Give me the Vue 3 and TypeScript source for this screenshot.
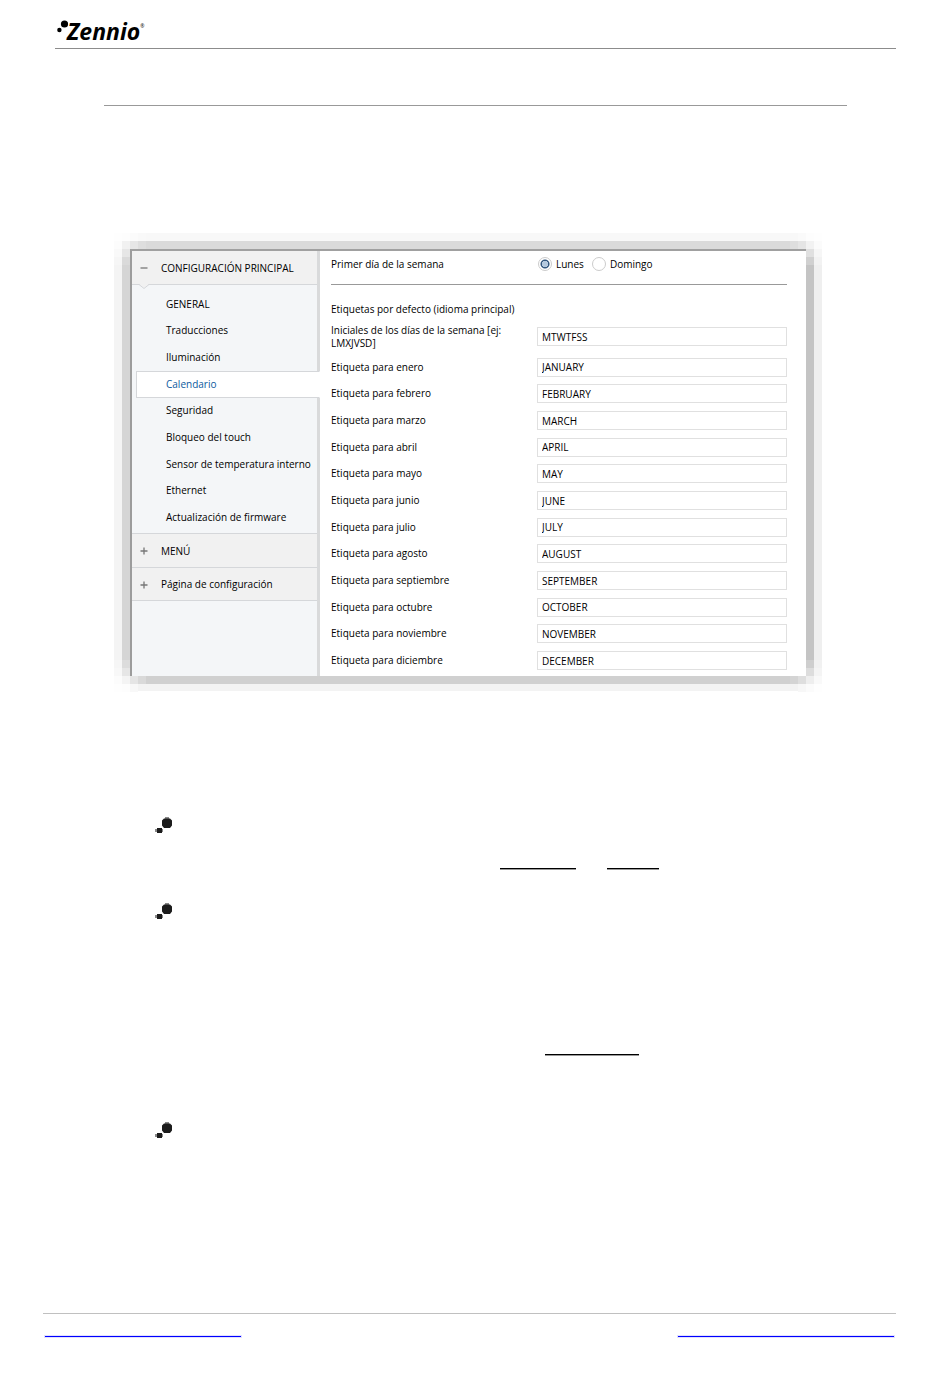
<script setup lang="ts">
import { ref } from 'vue'

interface Field {
  id: string
  label: string
  value: string
}

interface Corner {
  name: string
  flipX: boolean
  flipY: boolean
  cells: [number, number, string][]
}

const sections = ['GENERAL', 'Traducciones', 'Iluminación', 'Calendario', 'Seguridad', 'Bloqueo del touch', 'Sensor de temperatura interno', 'Ethernet', 'Actualización de firmware']
const active = ref('Calendario')
const firstDay = ref('Lunes')
const days = ['Lunes', 'Domingo']

const months: [string, string][] = [
  ['enero', 'JANUARY'], ['febrero', 'FEBRUARY'], ['marzo', 'MARCH'], ['abril', 'APRIL'],
  ['mayo', 'MAY'], ['junio', 'JUNE'], ['julio', 'JULY'], ['agosto', 'AUGUST'],
  ['septiembre', 'SEPTEMBER'], ['octubre', 'OCTOBER'], ['noviembre', 'NOVEMBER'], ['diciembre', 'DECEMBER'],
]
const initials = ref('MTWTFSS')
const fields = ref<Field[]>(months.map(([m, value]) => ({ id: `label-${m}`, label: `Etiqueta para ${m}`, value })))

// Shadow fade at each corner, in 8px cells counted inwards from the outer corner.
const corners: Corner[] = [
  { name: 'tl', flipX: false, flipY: false, cells: [[0, 0, '#fefefe'], [1, 0, '#fdfdfd'], [2, 0, '#fbfbfb'], [3, 0, '#f9f9f9'], [0, 1, '#fcfcfc'], [1, 1, '#f1f1f1'], [2, 1, '#e6e6e6'], [3, 1, '#dedede'], [0, 2, '#f9f9f9'], [1, 2, '#e6e6e6'], [0, 3, '#f6f6f6'], [1, 3, '#dadada']] },
  { name: 'tr', flipX: true, flipY: false, cells: [[0, 0, '#fefefe'], [1, 0, '#fdfdfd'], [2, 0, '#fafafa'], [0, 1, '#fbfbfb'], [1, 1, '#f2f2f2'], [2, 1, '#e5e5e5'], [3, 1, '#dedede'], [0, 2, '#f6f6f6'], [1, 2, '#e0e0e0'], [0, 3, '#f2f2f2'], [1, 3, '#d0d0d0']] },
  { name: 'bl', flipX: false, flipY: true, cells: [[0, 0, '#fefefe'], [1, 0, '#fdfdfd'], [2, 0, '#f8f8f8'], [0, 1, '#fcfcfc'], [1, 1, '#f4f4f4'], [2, 1, '#e5e5e5'], [3, 1, '#d9d9d9'], [0, 2, '#f8f8f8'], [1, 2, '#e6e6e6'], [0, 3, '#f6f6f6'], [1, 3, '#dcdcdc']] },
  { name: 'br', flipX: true, flipY: true, cells: [[0, 0, '#fefefe'], [1, 0, '#fbfbfb'], [2, 0, '#f7f7f7'], [0, 1, '#f9f9f9'], [1, 1, '#eeeeee'], [2, 1, '#dedede'], [3, 1, '#d4d4d4'], [0, 2, '#f4f4f4'], [1, 2, '#dddddd'], [0, 3, '#f1f1f1'], [1, 3, '#cecece']] },
]
const place = (n: number, flip: boolean): number => (flip ? 24 - n * 8 : n * 8)
</script>

<template>
  <div class="page">
    <header class="head">
      <svg class="dots" viewBox="0 0 12 14" aria-hidden="true">
        <circle cx="7.5" cy="4" r="3.6" />
        <circle cx="2.4" cy="10" r="2.2" />
      </svg>
      <span class="brand">Zennio</span><span class="reg">®</span>
    </header>
    <hr class="rule" />

    <div class="halo">
      <div class="shade">
        <div class="edge">
          <div class="panel">
            <nav class="side">
              <button class="group" type="button">
                <svg viewBox="0 0 8 8"><path d="M0.5 4h7" /></svg>CONFIGURACIÓN PRINCIPAL
                <svg class="notch" viewBox="0 0 10 5"><path class="fill" d="M0 0h10L5 4z" /><path class="line" d="M0 .5L5 4.5L10 .5" /></svg>
              </button>
              <ul class="items">
                <li v-for="s in sections" :key="s">
                  <button type="button" class="item" :class="{ active: s === active }" @click="active = s">{{ s }}</button>
                </li>
              </ul>
              <button class="group" type="button"><svg viewBox="0 0 8 8"><path d="M0.5 4h7M4 0.5v7" /></svg>MENÚ</button>
              <button class="group" type="button"><svg viewBox="0 0 8 8"><path d="M0.5 4h7M4 0.5v7" /></svg>Página de configuración</button>
            </nav>
            <form class="form" @submit.prevent>
              <div class="row first" role="radiogroup" aria-labelledby="first-day">
                <span id="first-day">Primer día de la semana</span>
                <div class="radios">
                  <label v-for="d in days" :key="d"><input v-model="firstDay" type="radio" name="day" :value="d" />{{ d }}</label>
                </div>
              </div>
              <h2>Etiquetas por defecto (idioma principal)</h2>
              <div class="row initials">
                <label for="initials">Iniciales de los días de la semana [ej: LMXJVSD]</label>
                <input id="initials" v-model="initials" type="text" />
              </div>
              <div class="months">
                <div v-for="f in fields" :key="f.id" class="row">
                  <label :for="f.id">{{ f.label }}</label>
                  <input :id="f.id" v-model="f.value" type="text" />
                </div>
              </div>
            </form>
          </div>
        </div>
      </div>
      <svg v-for="c in corners" :key="c.name" class="corner" :class="c.name" viewBox="0 0 32 32" aria-hidden="true">
        <rect v-for="([u, v, fill], i) in c.cells" :key="i" :x="place(u, c.flipX)" :y="place(v, c.flipY)" width="8" height="8" :fill="fill" />
      </svg>
    </div>

    <ul class="notes">
      <li>
        <svg class="bullet" viewBox="0 0 18 18"><path class="soft" d="M10 0h4v2h-4zM0 12h8v3H0z" /><path d="M9 1.500h6l2 2v5l-2 2.500h-6l-2-2.500v-5zM2 11h5v5H2z" /></svg>
        <div class="strokes"><i class="w76"></i><i class="w52"></i></div>
      </li>
      <li>
        <svg class="bullet" viewBox="0 0 18 18"><path class="soft" d="M10 0h4v2h-4zM0 12h8v3H0z" /><path d="M9 1.500h6l2 2v5l-2 2.500h-6l-2-2.500v-5zM2 11h5v5H2z" /></svg>
        <div class="strokes far"><i class="w94"></i></div>
      </li>
      <li>
        <svg class="bullet" viewBox="0 0 18 18"><path class="soft" d="M10 0h4v2h-4zM0 12h8v3H0z" /><path d="M9 1.500h6l2 2v5l-2 2.500h-6l-2-2.500v-5zM2 11h5v5H2z" /></svg>
      </li>
    </ul>

    <footer class="foot"><i class="left"></i><i class="right"></i></footer>
  </div>
</template>

<style>
body { margin: 0; background: #fff; }
</style>

<style scoped>
.page { box-sizing: border-box; min-height: 100vh; display: flex; flex-direction: column; padding-bottom: 41px; color: #000; font: 10px/13px "Open Sans", "Noto Sans", sans-serif; }
.head { display: flex; align-items: flex-start; box-sizing: border-box; height: 49px; margin: 0 54px 0 55px; padding: 18px 0 0 2px; border-bottom: 1px solid #8c8c8c; color: #000; }
.dots { width: 12px; height: 14px; margin-top: 2px; }
.brand { margin-left: -2px; font: italic 700 23px/26px "Open Sans", sans-serif; }
.reg { margin-top: 5px; font-size: 5px; line-height: 6px; }
.rule { height: 1px; margin: 56px 103px 0 104px; border: 0; background: #999; }
.halo { position: relative; margin: 127px 128px 0 114px; border: 8px solid; border-color: #f8f8f8 #efefef #f3f3f3 #f4f4f4; border-bottom-width: 7px; }
.shade { border: 8px solid; border-color: #dadada #c4c4c4 #d0d0d0 #d5d5d5; }
.edge { border-top: 2px solid #a0a0a0; border-left: 2px solid #9c9c9c; }
.corner { position: absolute; width: 32px; height: 32px; shape-rendering: crispEdges; pointer-events: none; }
.tl, .tr { top: -8px; }
.bl, .br { bottom: -8px; }
.tl, .bl { left: -8px; }
.tr, .br { right: -8px; }
.panel { display: flex; background: #fff; }
.side { flex: 0 0 185px; border-right: 3px solid #d9dadb; background: #f4f6f8; }
.group { position: relative; display: flex; align-items: center; gap: 13px; box-sizing: border-box; width: 100%; height: 34px; margin: 0; padding: 1px 0 0 8px; border: 0; border-bottom: 1px solid #d5d7da; background: #f1f1f1; color: #000; font: inherit; text-align: left; white-space: nowrap; }
.group:last-child { height: 33px; }
.group svg { width: 8px; height: 8px; fill: none; stroke: #777; stroke-width: 1.3; }
.group .notch { position: absolute; left: 7px; bottom: -5px; width: 10px; height: 5px; }
.notch .fill { fill: #f1f1f1; stroke: none; }
.notch .line { stroke: #d5d7da; stroke-width: 1; }
.items { display: grid; grid-auto-rows: 1fr; height: 240px; margin: 0; padding: 6px 0 2px; border-bottom: 1px solid #d5d7da; list-style: none; }
.items li { display: flex; }
.item { flex: 1; margin: 0 0 0 4px; padding: 0 0 0 29px; border: 1px solid transparent; background: none; color: #000; font: inherit; text-align: left; white-space: nowrap; }
.item.active { z-index: 1; margin-right: -3px; border-color: #d5d7da #fff #d5d7da #d5d7da; background: #fff; color: #0b5a9e; }
.form { flex: 1; padding: 0 19px 2px 11px; }
.row { display: grid; grid-template-columns: 206px 1fr; align-items: center; }
.first { box-sizing: border-box; height: 34px; padding-bottom: 6px; border-bottom: 1px solid #999; }
.radios { display: flex; gap: 7px; padding-bottom: 1px; }
.radios label { display: flex; align-items: center; gap: 4px; }
.radios input { appearance: none; box-sizing: border-box; width: 14px; height: 14px; margin: 0 0 0 1px; border: 1px solid #ccc; border-radius: 50%; background: #fff; }
.radios input:checked { background: radial-gradient(circle, #b5c9de 0 3px, #35587f 3px 4px, #fff 5px); }
h2 { margin: 18px 0 7px; font: inherit; }
.initials { height: 27px; }
.row > label { padding-right: 20px; }
.months { display: grid; grid-auto-rows: 1fr; height: 320px; margin-top: 4px; }
.row > input { box-sizing: border-box; width: 100%; height: 19px; padding: 0 4px; border: 1px solid #e0e0e0; background: #fff; color: #000; font: inherit; }
.notes { flex: 1; margin: 126px 103px 0 155px; padding: 0; list-style: none; }
.notes li:nth-child(1) { height: 86px; }
.notes li:nth-child(2) { height: 219px; }
.bullet { display: block; width: 18px; height: 18px; fill: #1c1c1c; }
.bullet .soft { fill: #888; }
.strokes { display: flex; gap: 31px; margin: 33px 0 0 345px; }
.strokes.far { margin: 133px 0 0 390px; }
.strokes i { height: 1px; background: #000; box-shadow: 0 1px #999; }
.w76 { width: 76px; }
.w52 { width: 52px; }
.w94 { width: 94px; }
.foot { display: flex; justify-content: space-between; margin: 0 54px 0 43px; padding: 22px 2px 0; border-top: 1px solid #c0c0c0; }
.foot i { height: 1px; background: #00f; box-shadow: 0 0 0 1px #e0e0ff; }
.left { width: 196px; }
.right { width: 216px; }
</style>
